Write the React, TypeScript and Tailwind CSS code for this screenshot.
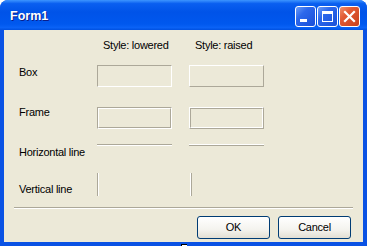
import type React from "react"

// XP 3D colours
const lowBox = "border border-t-[#aca899] border-l-[#aca899] border-b-white border-r-white"
const highBox = "border border-t-white border-l-white border-b-[#aca899] border-r-[#aca899]"

function Bevel({ kind, raised }: { kind: "box" | "frame" | "hline" | "vline"; raised?: boolean }) {
  if (kind === "box") {
    return <div className={`h-[22px] w-[75px] ${raised ? highBox : lowBox}`} />
  }
  if (kind === "frame") {
    return (
      <div className={`h-[22px] w-[75px] ${raised ? highBox : lowBox}`}>
        <div className={`h-full w-full ${raised ? lowBox : highBox}`} />
      </div>
    )
  }
  if (kind === "hline") {
    return (
      <div
        className={`h-[2px] w-[75px] border-t ${
          raised ? "border-t-white border-b border-b-[#aca899]" : "border-t-[#aca899] border-b border-b-white"
        }`}
      />
    )
  }
  return (
    <div
      className={`h-[23px] w-[2px] border-l ${
        raised ? "border-l-white border-r border-r-[#aca899]" : "border-l-[#aca899] border-r border-r-white"
      }`}
    />
  )
}

function Row({ className, label, labelClass, children }: { className: string; label?: string; labelClass?: string; children: React.ReactNode }) {
  return (
    <div className={`flex items-start pl-[15px] ${className}`}>
      <div className={`w-[78px] leading-[14px] ${labelClass ?? ""}`}>{label}</div>
      <div className="flex gap-[17px]">{children}</div>
    </div>
  )
}

function CaptionButton({ kind }: { kind: "min" | "max" | "close" }) {
  const bg =
    kind === "close"
      ? "bg-[linear-gradient(135deg,#f0906c_0%,#e25b35_35%,#c8401c_100%)]"
      : "bg-[linear-gradient(135deg,#6b9cf6_0%,#2c68ec_35%,#1a4fd8_100%)]"
  return (
    <div className={`flex h-[21px] w-[21px] items-center justify-center rounded-[3px] border border-white ${bg}`}>
      <svg width="19" height="19" viewBox="0 0 19 19">
        {kind === "min" && <rect x="4" y="12" width="7" height="3" fill="white" />}
        {kind === "max" && (
          <>
            <rect x="4.5" y="4.5" width="10" height="10" fill="none" stroke="white" strokeWidth="1" />
            <rect x="4" y="4" width="11" height="3" fill="white" />
          </>
        )}
        {kind === "close" && (
          <path d="M5 5 L14 14 M14 5 L5 14" stroke="white" strokeWidth="2.2" strokeLinecap="square" />
        )}
      </svg>
    </div>
  )
}

function XpButton({ children }: { children: React.ReactNode }) {
  return (
    <button className="flex h-[23px] w-[73px] items-center justify-center rounded-[3px] border border-[#003c74] bg-[linear-gradient(180deg,#ffffff_0%,#f4f3ee_60%,#e3dfd3_100%)] text-[11px] text-black">
      {children}
    </button>
  )
}

export default function App() {
  return (
    <div className="h-[246px] w-[367px] bg-white font-['Liberation_Sans',Arial,sans-serif] text-[11px] tracking-[-0.25px] text-black">
      <div className="relative flex h-full flex-col overflow-hidden rounded-t-[8px] bg-[#0a52e4]">
        {/* title bar */}
        <div className="flex h-[30px] shrink-0 items-center pl-[10px] pr-[7px] pt-[3px] bg-[linear-gradient(180deg,#3d95ff_0%,#0a5ff0_12%,#0053e8_40%,#0058ee_80%,#0a62f6_92%,#0050e0_100%)]">
          <span className="text-[12.5px] font-bold tracking-normal text-white [text-shadow:1px_1px_0_#0a1e8a]">Form1</span>
          <div className="ml-auto flex gap-[1px]">
            <CaptionButton kind="min" />
            <CaptionButton kind="max" />
            <CaptionButton kind="close" />
          </div>
        </div>

        {/* client area */}
        <div className="mx-[4px] mb-[4px] flex flex-1 flex-col bg-[#ece9d8]">
          <Row className="mt-[8px] h-[14px]">
            <div className="w-[75px] pl-[6px] leading-[14px]">Style: lowered</div>
            <div className="w-[75px] pl-[6px] leading-[14px]">Style: raised</div>
          </Row>

          <Row className="mt-[13px]" label="Box">
            <Bevel kind="box" />
            <Bevel kind="box" raised />
          </Row>

          <Row className="mt-[20px]" label="Frame" labelClass="-mt-[2px]">
            <Bevel kind="frame" />
            <Bevel kind="frame" raised />
          </Row>

          <Row className="mt-[15px]" label="Horizontal line" labelClass="mt-[1px]">
            <Bevel kind="hline" />
            <Bevel kind="hline" raised />
          </Row>

          <Row className="mt-[14px]" label="Vertical line" labelClass="mt-[9px]">
            <div className="w-[75px]">
              <Bevel kind="vline" />
            </div>
            <div className="w-[75px] pl-[1px]">
              <Bevel kind="vline" raised />
            </div>
          </Row>

          <div className="mx-[10px] mt-[11px] h-[2px] border-t border-t-[#aca899] border-b border-b-white" />

          <div className="mt-[7px] flex justify-end gap-[8px] pr-[12px]">
            <XpButton>OK</XpButton>
            <XpButton>Cancel</XpButton>
          </div>
        </div>

        {/* mouse pointer tip over the bottom frame */}
        <div className="absolute bottom-0 left-[181px] h-[2px] w-[6px] border-l border-t border-black bg-white" />
      </div>
    </div>
  )
}
